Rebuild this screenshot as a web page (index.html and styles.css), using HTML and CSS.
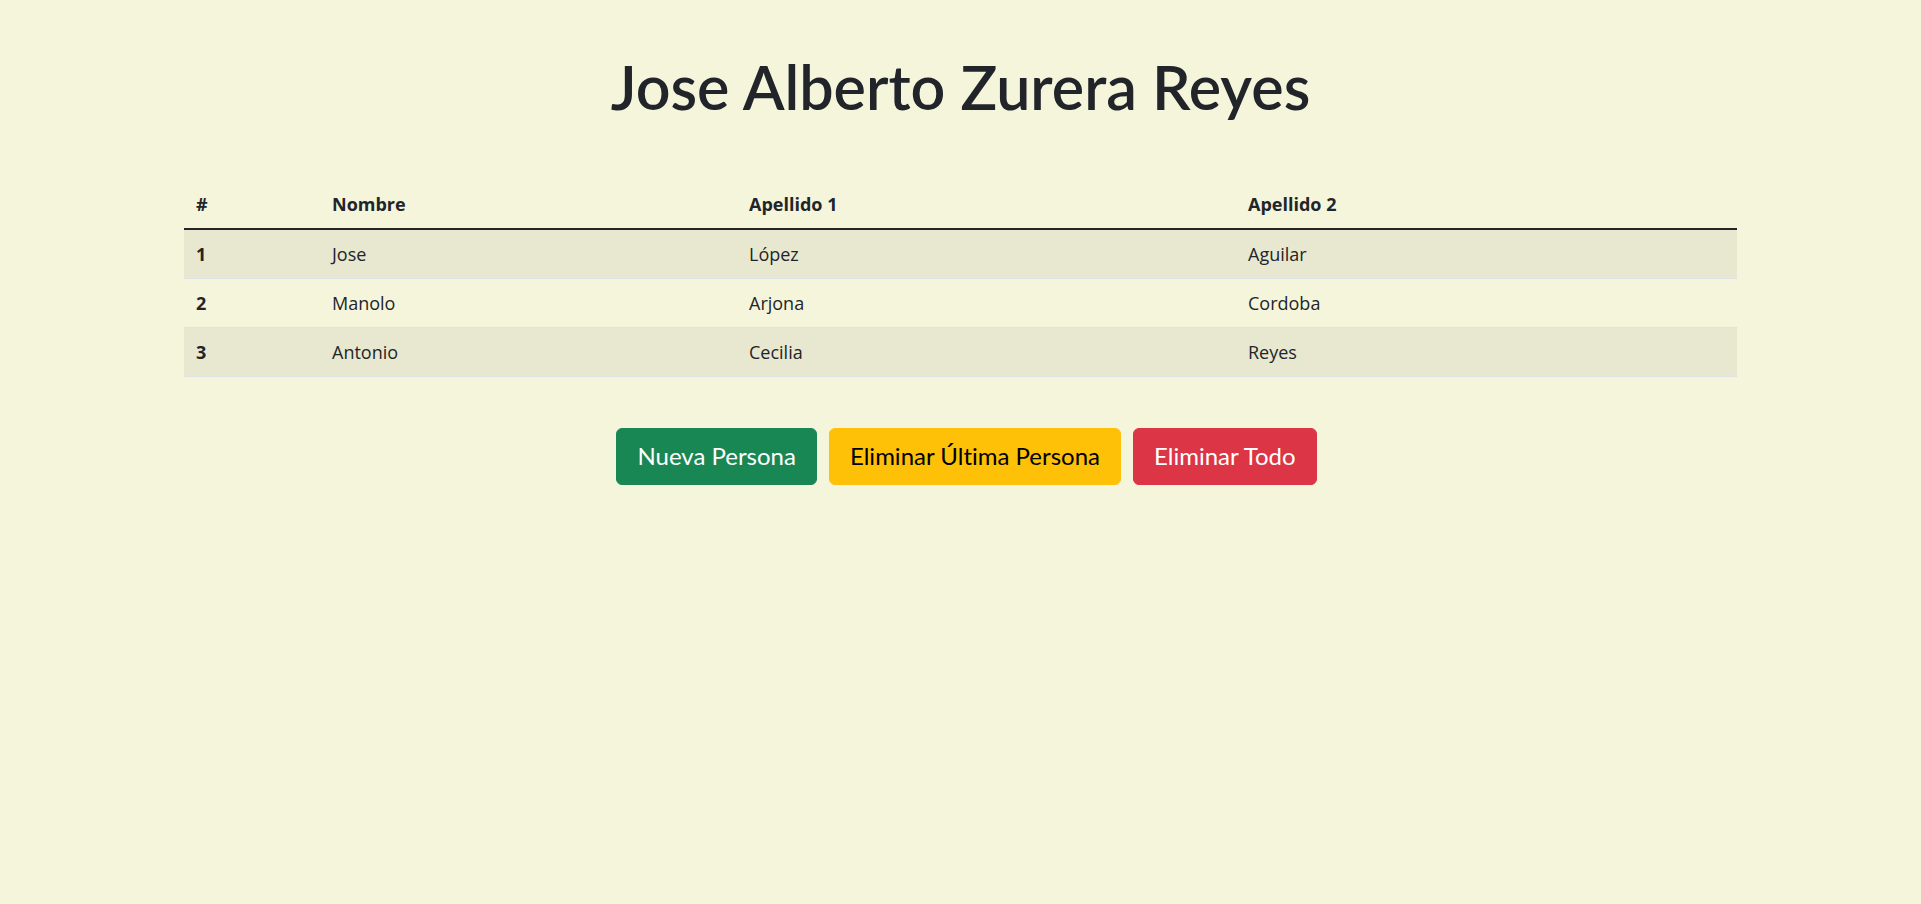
FILE: index.html
```html
<!DOCTYPE html>
<html lang="es">
<head>
<meta charset="utf-8">
<title>Jose Alberto Zurera Reyes</title>
<link rel="stylesheet" href="styles.css">
</head>
<body>
<main class="page">
  <h1 class="title">Jose Alberto Zurera Reyes</h1>
  <table class="people">
    <colgroup>
      <col class="c-num">
      <col class="c-name">
      <col class="c-ap1">
      <col class="c-ap2">
    </colgroup>
    <thead>
      <tr>
        <th>#</th>
        <th>Nombre</th>
        <th>Apellido 1</th>
        <th>Apellido 2</th>
      </tr>
    </thead>
    <tbody>
      <tr class="odd">
        <th>1</th>
        <td>Jose</td>
        <td>López</td>
        <td>Aguilar</td>
      </tr>
      <tr>
        <th>2</th>
        <td>Manolo</td>
        <td>Arjona</td>
        <td>Cordoba</td>
      </tr>
      <tr class="odd">
        <th>3</th>
        <td>Antonio</td>
        <td>Cecilia</td>
        <td>Reyes</td>
      </tr>
    </tbody>
  </table>
  <div class="actions">
    <button class="btn btn-green" type="button">Nueva Persona</button>
    <button class="btn btn-yellow" type="button">Eliminar Última Persona</button>
    <button class="btn btn-red" type="button">Eliminar Todo</button>
  </div>
</main>
</body>
</html>
```

FILE: styles.css
```css
html, body {
  margin: 0;
  padding: 0;
}

body {
  background: #f5f5dc;
  color: #212529;
  font-family: Lato, "Open Sans", sans-serif;
  font-size: 16px;
  line-height: 1.5;
  font-variant-ligatures: none;
}

.page {
  padding-top: 50px;
}

.title {
  margin: 0 0 56.8px;
  text-align: center;
  font-family: Lato, "Open Sans", sans-serif;
  font-size: 61px;
  font-weight: 600;
  line-height: 1.2;
  color: #212529;
}

.people {
  width: 1553px;
  margin: 0 auto;
  border-collapse: collapse;
  font-family: "Open Sans", "Noto Sans", sans-serif;
}

.c-num { width: 136px; }
.c-name { width: 417px; }
.c-ap1 { width: 499px; }
.c-ap2 { width: 501px; }

.people th,
.people td {
  padding: 12px;
  line-height: 24px;
  font-size: 18px;
  text-align: left;
  border-bottom: 1px solid #dee2e6;
}

.people th {
  font-weight: 700;
}

.people td {
  font-weight: 400;
}

.people thead th {
  border-bottom: 2px solid #212529;
}

.people tbody tr.odd th,
.people tbody tr.odd td {
  background: rgba(0, 0, 0, 0.05);
}

.actions {
  display: flex;
  justify-content: center;
  margin-top: 51px;
}

.btn {
  margin-left: 12px;
  padding: 9.5px 20px;
  border: 1px solid transparent;
  border-radius: 6px;
  font-family: Lato, "Open Sans", sans-serif;
  font-size: 24px;
  line-height: 36px;
  font-weight: 400;
  font-variant-ligatures: none;
  cursor: pointer;
}

.btn-green {
  background: #198754;
  border-color: #198754;
  color: #fff;
}

.btn-yellow {
  background: #ffc107;
  border-color: #ffc107;
  color: #000;
}

.btn-red {
  background: #dc3545;
  border-color: #dc3545;
  color: #fff;
}
```
